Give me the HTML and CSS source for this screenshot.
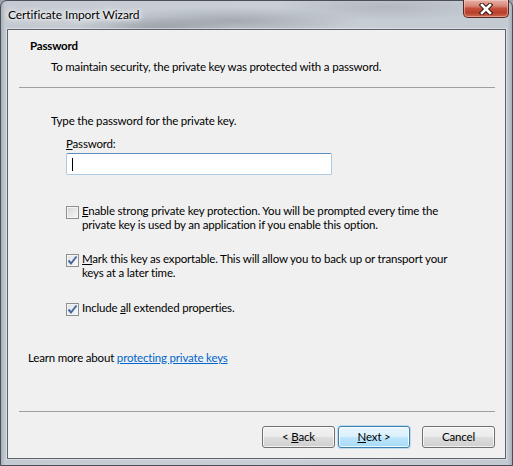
FILE: index.html
```html
<!DOCTYPE html>
<html>
<head>
<meta charset="utf-8">
<link rel="stylesheet" href="styles.css">
</head>
<body>
<div class="window">
  <div class="titlebar">
    <span class="title">Certificate Import Wizard</span>
    <div class="close">
      <svg width="16" height="12" viewBox="0 0 16 12">
        <path d="M4 2 L12 10 M12 2 L4 10" stroke="#3b1a16" stroke-width="4.6" stroke-linecap="square" fill="none"/>
        <path d="M4 2 L12 10 M12 2 L4 10" stroke="#ffffff" stroke-width="2.6" stroke-linecap="square" fill="none"/>
      </svg>
    </div>
  </div>
  <div class="client">
    <div class="h-title">Password</div>
    <div class="h-sub">To maintain security, the private key was protected with a password.</div>
    <div class="sep"></div>
    <div class="prompt">Type the password for the private key.</div>
    <div class="field-label"><u>P</u>assword:</div>
    <div class="input"><span class="caret"></span></div>

    <div class="check-row cb1">
      <span class="box"></span>
      <span class="lbl"><u>E</u>nable strong private key protection. You will be prompted every time the<br>private key is used by an application if you enable this option.</span>
    </div>
    <div class="check-row cb2">
      <span class="box checked"><svg width="11" height="11" viewBox="0 0 11 11"><path d="M1.5 5.5 L4 8.5 L9.5 1.5" stroke="#4868a0" stroke-width="2" fill="none"/></svg></span>
      <span class="lbl"><u>M</u>ark this key as exportable. This will allow you to back up or transport your<br>keys at a later time.</span>
    </div>
    <div class="check-row cb3">
      <span class="box checked"><svg width="11" height="11" viewBox="0 0 11 11"><path d="M1.5 5.5 L4 8.5 L9.5 1.5" stroke="#4868a0" stroke-width="2" fill="none"/></svg></span>
      <span class="lbl">Include <u>a</u>ll extended properties.</span>
    </div>

    <div class="learn">Learn more about <span class="link">protecting private keys</span></div>

    <div class="spacer"></div>
    <div class="sep bottom"></div>
    <div class="buttons">
      <div class="btn">&lt;&nbsp;<u>B</u>ack</div>
      <div class="btn default"><u>N</u>ext&nbsp;&gt;</div>
      <div class="btn cancel">Cancel</div>
    </div>
  </div>
</div>
</body>
</html>
```

FILE: styles.css
```css
html, body {
  margin: 0;
  padding: 0;
  width: 513px;
  height: 466px;
  overflow: hidden;
  background: #9aa3ad;
}
body {
  font-family: Lato, "Liberation Sans", sans-serif;
  font-size: 11.5px;
  letter-spacing: -0.18px;
  color: #000;
}
.window {
  width: 513px;
  height: 466px;
  box-sizing: border-box;
  border: 1px solid #4b5058;
  border-radius: 7px 7px 0 0;
  padding: 0 6px 6px 6px;
  display: flex;
  flex-direction: column;
  background:
    radial-gradient(ellipse 130px 14px at 45% 20px, rgba(95,100,110,0.35), rgba(95,100,110,0) 100%),
    radial-gradient(ellipse 80px 10px at 30% 26px, rgba(90,95,105,0.30), rgba(90,95,105,0) 100%),
    radial-gradient(ellipse 110px 14px at 75% 6px, rgba(120,125,135,0.25), rgba(120,125,135,0) 100%),
    linear-gradient(90deg, #a7afb8 0px, #c4cad1 4px, #c9cfd6 50%, #c4cad1 calc(100% - 4px), #a7afb8 100%);
}
.titlebar {
  height: 28px;
  margin: 0 -6px;
  padding-left: 7px;
  display: flex;
  justify-content: space-between;
  align-items: flex-start;
  flex: none;
}
.title {
  margin-top: 6px;
  line-height: 16px;
  font-size: 12px;
  letter-spacing: -0.1px;
  text-shadow: 0 0 6px #fff, 0 0 10px #fff, 0 0 3px #fff;
}
.close {
  width: 46px;
  height: 18px;
  margin-top: -1px;
  margin-right: 3px;
  box-sizing: border-box;
  border: 1px solid #5a2620;
  border-top: none;
  border-radius: 0 0 5px 5px;
  background: linear-gradient(180deg, #e6b0a6 0%, #d88878 35%, #c5503c 50%, #b8402c 75%, #cf6a50 100%);
  box-shadow: inset 0 0 0 1px rgba(255,220,210,0.45);
  display: flex;
  align-items: center;
  justify-content: center;
}
.client {
  flex: 1;
  border: 1px solid #5c636c;
  background: #f0f0f0;
  display: flex;
  flex-direction: column;
  box-shadow: 0 0 0 1px rgba(255,255,255,0.35);
}
.h-title {
  font-weight: bold;
  line-height: 16px;
  padding-top: 8px;
  padding-left: 22px;
}
.h-sub {
  line-height: 16px;
  margin-top: 5px;
  padding-left: 43px;
}
.sep {
  height: 1px;
  background: #a0a0a0;
  margin: 12px 0 0 11px;
  width: 476px;
  flex: none;
}
.prompt {
  line-height: 16px;
  margin-top: 25px;
  padding-left: 43px;
}
.field-label {
  line-height: 16px;
  margin-top: 7px;
  padding-left: 58px;
}
.input {
  margin: 1px 0 0 58px;
  width: 266px;
  height: 22px;
  box-sizing: border-box;
  background: #fff;
  border: 1px solid #a9cbe4;
  border-top-color: #5b8fc0;
  border-radius: 2px;
  position: relative;
  flex: none;
}
.caret {
  position: absolute;
  left: 5px;
  top: 4px;
  width: 1px;
  height: 13px;
  background: #000;
}
.check-row {
  display: flex;
  align-items: flex-start;
  padding-left: 58px;
  line-height: 13.5px;
}
.cb1 { margin-top: 29px; }
.cb2 { margin-top: 21px; }
.cb3 { margin-top: 22px; }
.box {
  width: 13px;
  height: 13px;
  box-sizing: border-box;
  border: 1px solid #8f8f8f;
  background: linear-gradient(135deg, #d4d4d4 0%, #ebebeb 60%, #f7f7f7 100%);
  box-shadow: inset 0 0 0 1px #f4f4f4;
  margin-top: 1.5px;
  margin-right: 3px;
  flex: none;
  display: flex;
  align-items: center;
  justify-content: center;
}
.box.checked {
  background: linear-gradient(135deg, #dfe3e8 0%, #eef0f3 60%, #f9f9fa 100%);
}
.box svg { display: block; }
.learn {
  line-height: 16px;
  margin-top: 34px;
  padding-left: 20px;
}
.link {
  color: #0066cc;
  text-decoration: underline;
}
.spacer { flex: 1; }
.sep.bottom { margin-top: 0; }
.buttons {
  display: flex;
  justify-content: flex-end;
  margin: 14px 10px 10px 0;
  flex: none;
}
.btn {
  width: 73px;
  height: 22px;
  box-sizing: border-box;
  border: 1px solid #707070;
  border-radius: 3px;
  background: linear-gradient(180deg, #f2f2f2 0%, #ebebeb 48%, #dddddd 52%, #cfcfcf 100%);
  box-shadow: inset 0 0 0 1px rgba(255,255,255,0.7);
  display: flex;
  align-items: center;
  justify-content: center;
  line-height: 16px;
}
.btn + .btn { margin-left: 3px; }
.btn.default {
  width: 72px;
  border-color: #3c7fb1;
  background: linear-gradient(180deg, #eaf6fd 0%, #d9f0fc 48%, #bee6fd 52%, #a7d9f5 100%);
  box-shadow: inset 0 0 0 1px rgba(255,255,255,0.8), 0 0 0 1px rgba(98,180,230,0.35);
}
.btn.cancel { margin-left: 12px; }
```
